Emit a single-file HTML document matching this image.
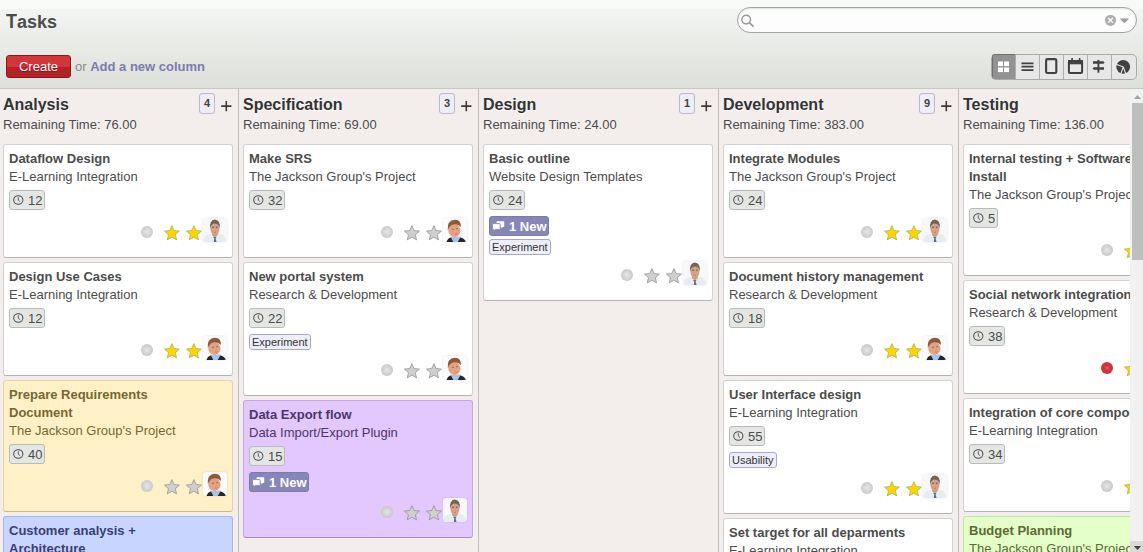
<!DOCTYPE html>
<html><head><meta charset="utf-8"><title>Tasks</title><style>
*{margin:0;padding:0;box-sizing:border-box}
html,body{width:1143px;height:552px;overflow:hidden;font-family:"Liberation Sans", sans-serif;background:#f0eeee}
.ab{position:absolute}
.b{font-weight:bold}
#hdr{position:absolute;left:0;top:0;width:1143px;height:89px;background:linear-gradient(#f8faf7 0,#f8faf7 9px,#f3f5f2 9px,#dddfdb 88px);border-bottom:1px solid #c6c8c6}
#title{position:absolute;left:6px;top:11px;font-size:18px;line-height:22px;font-weight:bold;color:#4c4c4c}
#search{position:absolute;left:737px;top:7px;width:400px;height:26px;border:1px solid #a3a3a3;border-radius:13px;background:#fdfdfd;box-shadow:inset 0 1px 2px rgba(0,0,0,0.12)}
#create{position:absolute;left:6px;top:55px;width:65px;height:23px;border:1px solid #8e1818;border-radius:3px;background:linear-gradient(#d2353a 0,#d2353a 50%,#b32226 50%,#b32226 100%);color:#fff;font-size:13px;line-height:21px;text-align:center;text-shadow:0 1px 1px rgba(0,0,0,0.35)}
#ortxt{position:absolute;left:75px;top:58px;font-size:13px;line-height:18px;color:#8a8a8a}
#ortxt a{color:#7c7bad;font-weight:bold;text-decoration:none}
#views{position:absolute;left:991px;top:54px;width:146px;height:26px;border:1px solid #a9aaa9;border-radius:5px;background:#e6e7e6;overflow:hidden}
#views .vb{position:absolute;top:0;height:24px;width:24px;border-left:1px solid #b3b3b3}
#cols{position:absolute;left:0;top:89px;width:1130px;height:463px;background:#f3eeec;overflow:hidden}
.sep{position:absolute;top:0;width:1px;height:463px;background:#bcbfbd}
.colhead{position:absolute;font-size:16px;line-height:20px;color:#333;text-shadow:0 1px 0 #fff;white-space:nowrap}
.rem{position:absolute;font-size:13px;line-height:18px;color:#4c4c4c;white-space:nowrap}
.cnt{position:absolute;width:16px;height:21px;border:1px solid #b8b8c8;border-radius:3px;background:#eeeef8;font-size:11px;font-weight:bold;line-height:19px;text-align:center;color:#444}
.plus{position:absolute;width:12px;height:12px}
.card{position:absolute;width:230px;border:1px solid rgba(0,0,0,0.16);border-radius:3px;overflow:hidden}
.card .t{position:absolute;font-size:13px;line-height:18px;white-space:nowrap}
.hb{position:absolute;height:20px;border:1px solid #b9bbb9;border-radius:3px;background:#e4e6e4;font-size:13px;line-height:15px;color:#4c4c4c}
.nb{position:absolute;white-space:nowrap;width:60px;height:20px;border:1px solid #7d7aae;border-radius:3px;background:#8786b8;color:#fff;font-size:13px;font-weight:bold;line-height:17px}
.tg{position:absolute;height:16px;border:1px solid #a9a9bf;border-radius:3px;background:#eeeefa;color:#333;font-size:11px;line-height:14px;padding-left:2px;white-space:nowrap}
.dot{position:absolute;width:12px;height:12px;border-radius:6px;background-image:radial-gradient(circle at 50% 50%, rgba(255,255,255,0.55) 0, rgba(255,255,255,0) 70%)!important}
.dot.red{background-image:radial-gradient(circle at 50% 50%, rgba(255,255,255,0.25) 0, rgba(255,255,255,0) 30%)!important}
.av{border-radius:3px;box-shadow:0 0 2px rgba(0,0,0,0.15)}
#sb{position:absolute;left:1130px;top:89px;width:13px;height:463px;background:#f0f1f0}
</style></head>
<body>
<div id="hdr">
<div id="title"><span style="display:inline-block;transform:scaleY(1.075);transform-origin:50% 17px">T</span>asks</div>
<div id="search"><svg class="ab" style="left:2px;top:5px" width="16" height="16" viewBox="0 0 16 16"><circle cx="6.2" cy="6.6" r="4.3" fill="none" stroke="#9a9a9a" stroke-width="1.5"/><path d="M9.3 9.7 L13.5 13.6" stroke="#9a9a9a" stroke-width="1.8"/></svg><svg class="ab" style="left:365px;top:5px" width="30" height="14" viewBox="0 0 30 14"><circle cx="7.5" cy="7.3" r="5.6" fill="#b0b0b0"/><path d="M5.2 5 L9.8 9.6 M9.8 5 L5.2 9.6" stroke="#fff" stroke-width="1.3"/><path d="M16.6 5.4 H26.2 L21.4 10.2 Z" fill="#9c9c9c"/></svg></div>
<div id="create">Create</div>
<div id="ortxt">or <a>Add a new column</a></div>
<div id="views"></div>
<svg class="ab" style="left:0;top:0" width="1143" height="89" viewBox="0 0 1143 89"><rect x="992.5" y="54.5" width="22.5" height="24.5" fill="#919291"/><path d="M992.5 77 V56.5 Q992.5 54.5 994.5 54.5 H1015" fill="none" stroke="#6f706f" stroke-width="1"/><rect x="998" y="61.5" width="5" height="4.6" fill="#fff"/><rect x="1004" y="61.5" width="5" height="4.6" fill="#fff"/><rect x="998" y="67.5" width="5" height="4.6" fill="#fff"/><rect x="1004" y="67.5" width="5" height="4.6" fill="#fff"/><path d="M1015.5 55 V79 M1039.5 55 V79 M1063.5 55 V79 M1087.5 55 V79 M1111.5 55 V79" stroke="#adaead" stroke-width="1"/><path d="M1021.5 63.3 H1033.5 M1021.5 66.7 H1033.5 M1021.5 70.1 H1033.5" stroke="#404040" stroke-width="1.8"/><rect x="1046.1" y="59.1" width="10.2" height="13.9" rx="1.3" fill="none" stroke="#404040" stroke-width="2.1"/><rect x="1068.9" y="60.9" width="13.2" height="12.1" rx="1" fill="none" stroke="#404040" stroke-width="2"/><rect x="1068" y="60" width="15" height="4.3" fill="#404040"/><path d="M1072.1 58 V61.5 M1079.6 58 V61.5" stroke="#404040" stroke-width="1.6"/><path d="M1093 61.2 H1103.3 L1104.7 62.45 L1103.3 63.7 H1093 Z M1104 67.2 H1093.9 L1092.5 68.45 L1093.9 69.7 H1104 Z" fill="#404040"/><path d="M1098.4 59.9 V72.7" stroke="#404040" stroke-width="1.9"/><circle cx="1123.2" cy="66.8" r="6.9" fill="#404040"/><path d="M1123.3 66.9 L1115.5 64.1 M1123.3 66.9 L1120.6 74.5 M1123.3 66.9 L1126 74.5" stroke="#e6e7e6" stroke-width="1.1"/></svg>
</div>
<div id="cols">
<div class="sep" style="left:238px"></div>
<div class="sep" style="left:478px"></div>
<div class="sep" style="left:718px"></div>
<div class="sep" style="left:958px"></div>
</div>
<div id="layer" style="position:absolute;left:0;top:0;width:1130px;height:552px;overflow:hidden">
<div class="colhead b" style="left:3px;top:95px">Analysis</div>
<div class="rem" style="left:3px;top:116px">Remaining Time: 76.00</div>
<div class="cnt" style="left:199px;top:93px">4</div>
<div class="plus" style="left:220px;top:98px"><svg width="12" height="12" viewBox="0 0 12 12"><path d="M6.3 1 V11.2 M1.2 6.1 H11.4" stroke="#3a3a3a" stroke-width="1.55"/></svg></div>
<div class="card" style="left:3px;top:144px;height:114px;background:#ffffff;border-color:#d0d3d1;border-bottom-color:#b1b4b2;color:#4c4c4c">
<div class="t b" style="left:5px;top:5px">Dataflow Design</div>
<div class="t" style="left:5px;top:23px">E-Learning Integration</div>
<div class="hb" style="left:5px;top:45px;width:36px"><svg width="11" height="10" viewBox="0 0 11 10" style="position:absolute;left:3px;top:3.5px"><ellipse cx="5.3" cy="5" rx="4.6" ry="4.3" fill="none" stroke="#4c4c4c" stroke-width="1.05"/><path d="M5.3 2.3 V5.1 L7.1 6.7" fill="none" stroke="#4c4c4c" stroke-width="0.9"/></svg><span style="position:absolute;left:18px;top:2px">12</span></div>
<div class="dot" style="left:137px;top:81px;background:#c9c9c9"></div>
<svg class="ab" style="left:160px;top:80px" width="16" height="16" viewBox="0 0 16 16"><polygon points="7.90,0.60 10.07,5.51 15.41,6.06 11.42,9.64 12.54,14.89 7.90,12.20 3.26,14.89 4.38,9.64 0.39,6.06 5.73,5.51" fill="#ffd500" stroke="#9a9a60" stroke-width="0.6" stroke-linejoin="miter"/></svg>
<svg class="ab" style="left:182px;top:80px" width="16" height="16" viewBox="0 0 16 16"><polygon points="7.90,0.60 10.07,5.51 15.41,6.06 11.42,9.64 12.54,14.89 7.90,12.20 3.26,14.89 4.38,9.64 0.39,6.06 5.73,5.51" fill="#ffd500" stroke="#9a9a60" stroke-width="0.6" stroke-linejoin="miter"/></svg>
<svg class="ab av" style="left:199px;top:73px" width="24" height="24" viewBox="0 0 24 24"><rect width="24" height="24" rx="3" fill="#f7f8f9"/><path d="M0.5 24 V21.5 Q1.5 17 7.5 15.8 L11.8 18 L16 15.8 Q22.5 17 23.5 21.5 V24 Z" fill="#e8ecf1"/><path d="M10 18.8 L13.6 18.8 L12.6 20.6 L13.6 24 L10.8 24 L11.2 20.6 Z" fill="#5f6f88"/><path d="M8.8 13 L15 13 L14.6 17.2 L11.8 19 L9.2 17.2 Z" fill="#c99880"/><path d="M7.4 9.5 Q7.4 16.8 11.9 17.2 Q16.4 16.8 16.4 9.5 Q16.4 4.6 11.9 4.6 Q7.4 4.6 7.4 9.5 Z" fill="#d6a187"/><path d="M9 9.2 H11 M12.8 9.2 H14.8" stroke="#6a4a3a" stroke-width="0.9"/><path d="M11.2 14.4 H13" stroke="#a86a5a" stroke-width="0.6"/><path d="M7 11 Q6.2 2 11.8 1.4 Q17.6 1.6 16.9 11 Q16.6 5.6 11.8 5.4 Q7.6 5.6 7 11 Z" fill="#756454"/></svg>
</div>
<div class="card" style="left:3px;top:262px;height:114px;background:#ffffff;border-color:#d0d3d1;border-bottom-color:#b1b4b2;color:#4c4c4c">
<div class="t b" style="left:5px;top:5px">Design Use Cases</div>
<div class="t" style="left:5px;top:23px">E-Learning Integration</div>
<div class="hb" style="left:5px;top:45px;width:36px"><svg width="11" height="10" viewBox="0 0 11 10" style="position:absolute;left:3px;top:3.5px"><ellipse cx="5.3" cy="5" rx="4.6" ry="4.3" fill="none" stroke="#4c4c4c" stroke-width="1.05"/><path d="M5.3 2.3 V5.1 L7.1 6.7" fill="none" stroke="#4c4c4c" stroke-width="0.9"/></svg><span style="position:absolute;left:18px;top:2px">12</span></div>
<div class="dot" style="left:137px;top:81px;background:#c9c9c9"></div>
<svg class="ab" style="left:160px;top:80px" width="16" height="16" viewBox="0 0 16 16"><polygon points="7.90,0.60 10.07,5.51 15.41,6.06 11.42,9.64 12.54,14.89 7.90,12.20 3.26,14.89 4.38,9.64 0.39,6.06 5.73,5.51" fill="#ffd500" stroke="#9a9a60" stroke-width="0.6" stroke-linejoin="miter"/></svg>
<svg class="ab" style="left:182px;top:80px" width="16" height="16" viewBox="0 0 16 16"><polygon points="7.90,0.60 10.07,5.51 15.41,6.06 11.42,9.64 12.54,14.89 7.90,12.20 3.26,14.89 4.38,9.64 0.39,6.06 5.73,5.51" fill="#ffd500" stroke="#9a9a60" stroke-width="0.6" stroke-linejoin="miter"/></svg>
<svg class="ab av" style="left:199px;top:73px" width="24" height="24" viewBox="0 0 24 24"><rect width="24" height="24" rx="3" fill="#fbfbfb"/><path d="M3.5 24 Q4.5 20 9 19 L16 19 Q21.5 20 23 24 Z" fill="#23262b"/><path d="M7.6 18.6 L17.8 18.6 L14.8 24 L10.2 24 Z" fill="#a9c2e6"/><ellipse cx="11.4" cy="12.4" rx="6.1" ry="6.6" fill="#e3a383" transform="rotate(-12 11.4 12.4)"/><path d="M9 11.3 H11 M13 10.7 H15" stroke="#8a5a40" stroke-width="0.8"/><path d="M12.2 16 Q13.5 16.6 14.6 15.6" stroke="#b86a5a" stroke-width="0.7" fill="none"/><path d="M4.8 12.5 Q4 2 12 1.8 Q18.5 2.2 17.8 9 Q15.5 5.8 11 6.2 Q6.5 7 4.8 12.5 Z" fill="#8c5a38"/></svg>
</div>
<div class="card" style="left:3px;top:380px;height:132px;background:#fff1c7;border-color:#e0d4ab;border-bottom-color:#c8b98e;color:#756832">
<div class="t b" style="left:5px;top:5px">Prepare Requirements</div>
<div class="t b" style="left:5px;top:23px">Document</div>
<div class="t" style="left:5px;top:41px">The Jackson Group's Project</div>
<div class="hb" style="left:5px;top:63px;width:36px"><svg width="11" height="10" viewBox="0 0 11 10" style="position:absolute;left:3px;top:3.5px"><ellipse cx="5.3" cy="5" rx="4.6" ry="4.3" fill="none" stroke="#4c4c4c" stroke-width="1.05"/><path d="M5.3 2.3 V5.1 L7.1 6.7" fill="none" stroke="#4c4c4c" stroke-width="0.9"/></svg><span style="position:absolute;left:18px;top:2px">40</span></div>
<div class="dot" style="left:137px;top:99px;background:#c9c9c9"></div>
<svg class="ab" style="left:160px;top:98px" width="16" height="16" viewBox="0 0 16 16"><polygon points="7.90,0.60 10.07,5.51 15.41,6.06 11.42,9.64 12.54,14.89 7.90,12.20 3.26,14.89 4.38,9.64 0.39,6.06 5.73,5.51" fill="#cfcfcf" stroke="#7d7d7d" stroke-width="0.6" stroke-linejoin="miter"/></svg>
<svg class="ab" style="left:182px;top:98px" width="16" height="16" viewBox="0 0 16 16"><polygon points="7.90,0.60 10.07,5.51 15.41,6.06 11.42,9.64 12.54,14.89 7.90,12.20 3.26,14.89 4.38,9.64 0.39,6.06 5.73,5.51" fill="#cfcfcf" stroke="#7d7d7d" stroke-width="0.6" stroke-linejoin="miter"/></svg>
<svg class="ab av" style="left:199px;top:91px" width="24" height="24" viewBox="0 0 24 24"><rect width="24" height="24" rx="3" fill="#fbfbfb"/><path d="M3.5 24 Q4.5 20 9 19 L16 19 Q21.5 20 23 24 Z" fill="#23262b"/><path d="M7.6 18.6 L17.8 18.6 L14.8 24 L10.2 24 Z" fill="#a9c2e6"/><ellipse cx="11.4" cy="12.4" rx="6.1" ry="6.6" fill="#e3a383" transform="rotate(-12 11.4 12.4)"/><path d="M9 11.3 H11 M13 10.7 H15" stroke="#8a5a40" stroke-width="0.8"/><path d="M12.2 16 Q13.5 16.6 14.6 15.6" stroke="#b86a5a" stroke-width="0.7" fill="none"/><path d="M4.8 12.5 Q4 2 12 1.8 Q18.5 2.2 17.8 9 Q15.5 5.8 11 6.2 Q6.5 7 4.8 12.5 Z" fill="#8c5a38"/></svg>
</div>
<div class="card" style="left:3px;top:516px;height:132px;background:#c7d5ff;border-color:#a9b6df;border-bottom-color:#8f9bc4;color:#3b3e75">
<div class="t b" style="left:5px;top:5px">Customer analysis +</div>
<div class="t b" style="left:5px;top:23px">Architecture</div>
<div class="t" style="left:5px;top:41px">The Jackson Group's Project</div>
<div class="hb" style="left:5px;top:63px;width:36px"><svg width="11" height="10" viewBox="0 0 11 10" style="position:absolute;left:3px;top:3.5px"><ellipse cx="5.3" cy="5" rx="4.6" ry="4.3" fill="none" stroke="#4c4c4c" stroke-width="1.05"/><path d="M5.3 2.3 V5.1 L7.1 6.7" fill="none" stroke="#4c4c4c" stroke-width="0.9"/></svg><span style="position:absolute;left:18px;top:2px">40</span></div>
<div class="dot" style="left:137px;top:99px;background:#c9c9c9"></div>
<svg class="ab" style="left:160px;top:98px" width="16" height="16" viewBox="0 0 16 16"><polygon points="7.90,0.60 10.07,5.51 15.41,6.06 11.42,9.64 12.54,14.89 7.90,12.20 3.26,14.89 4.38,9.64 0.39,6.06 5.73,5.51" fill="#cfcfcf" stroke="#7d7d7d" stroke-width="0.6" stroke-linejoin="miter"/></svg>
<svg class="ab" style="left:182px;top:98px" width="16" height="16" viewBox="0 0 16 16"><polygon points="7.90,0.60 10.07,5.51 15.41,6.06 11.42,9.64 12.54,14.89 7.90,12.20 3.26,14.89 4.38,9.64 0.39,6.06 5.73,5.51" fill="#cfcfcf" stroke="#7d7d7d" stroke-width="0.6" stroke-linejoin="miter"/></svg>
<svg class="ab av" style="left:199px;top:91px" width="24" height="24" viewBox="0 0 24 24"><rect width="24" height="24" rx="3" fill="#fbfbfb"/><path d="M3.5 24 Q4.5 20 9 19 L16 19 Q21.5 20 23 24 Z" fill="#23262b"/><path d="M7.6 18.6 L17.8 18.6 L14.8 24 L10.2 24 Z" fill="#a9c2e6"/><ellipse cx="11.4" cy="12.4" rx="6.1" ry="6.6" fill="#e3a383" transform="rotate(-12 11.4 12.4)"/><path d="M9 11.3 H11 M13 10.7 H15" stroke="#8a5a40" stroke-width="0.8"/><path d="M12.2 16 Q13.5 16.6 14.6 15.6" stroke="#b86a5a" stroke-width="0.7" fill="none"/><path d="M4.8 12.5 Q4 2 12 1.8 Q18.5 2.2 17.8 9 Q15.5 5.8 11 6.2 Q6.5 7 4.8 12.5 Z" fill="#8c5a38"/></svg>
</div>
<div class="colhead b" style="left:243px;top:95px">Specification</div>
<div class="rem" style="left:243px;top:116px">Remaining Time: 69.00</div>
<div class="cnt" style="left:439px;top:93px">3</div>
<div class="plus" style="left:460px;top:98px"><svg width="12" height="12" viewBox="0 0 12 12"><path d="M6.3 1 V11.2 M1.2 6.1 H11.4" stroke="#3a3a3a" stroke-width="1.55"/></svg></div>
<div class="card" style="left:243px;top:144px;height:114px;background:#ffffff;border-color:#d0d3d1;border-bottom-color:#b1b4b2;color:#4c4c4c">
<div class="t b" style="left:5px;top:5px">Make SRS</div>
<div class="t" style="left:5px;top:23px">The Jackson Group's Project</div>
<div class="hb" style="left:5px;top:45px;width:36px"><svg width="11" height="10" viewBox="0 0 11 10" style="position:absolute;left:3px;top:3.5px"><ellipse cx="5.3" cy="5" rx="4.6" ry="4.3" fill="none" stroke="#4c4c4c" stroke-width="1.05"/><path d="M5.3 2.3 V5.1 L7.1 6.7" fill="none" stroke="#4c4c4c" stroke-width="0.9"/></svg><span style="position:absolute;left:18px;top:2px">32</span></div>
<div class="dot" style="left:137px;top:81px;background:#c9c9c9"></div>
<svg class="ab" style="left:160px;top:80px" width="16" height="16" viewBox="0 0 16 16"><polygon points="7.90,0.60 10.07,5.51 15.41,6.06 11.42,9.64 12.54,14.89 7.90,12.20 3.26,14.89 4.38,9.64 0.39,6.06 5.73,5.51" fill="#cfcfcf" stroke="#7d7d7d" stroke-width="0.6" stroke-linejoin="miter"/></svg>
<svg class="ab" style="left:182px;top:80px" width="16" height="16" viewBox="0 0 16 16"><polygon points="7.90,0.60 10.07,5.51 15.41,6.06 11.42,9.64 12.54,14.89 7.90,12.20 3.26,14.89 4.38,9.64 0.39,6.06 5.73,5.51" fill="#cfcfcf" stroke="#7d7d7d" stroke-width="0.6" stroke-linejoin="miter"/></svg>
<svg class="ab av" style="left:199px;top:73px" width="24" height="24" viewBox="0 0 24 24"><rect width="24" height="24" rx="3" fill="#fbfbfb"/><path d="M3.5 24 Q4.5 20 9 19 L16 19 Q21.5 20 23 24 Z" fill="#23262b"/><path d="M7.6 18.6 L17.8 18.6 L14.8 24 L10.2 24 Z" fill="#a9c2e6"/><ellipse cx="11.4" cy="12.4" rx="6.1" ry="6.6" fill="#e3a383" transform="rotate(-12 11.4 12.4)"/><path d="M9 11.3 H11 M13 10.7 H15" stroke="#8a5a40" stroke-width="0.8"/><path d="M12.2 16 Q13.5 16.6 14.6 15.6" stroke="#b86a5a" stroke-width="0.7" fill="none"/><path d="M4.8 12.5 Q4 2 12 1.8 Q18.5 2.2 17.8 9 Q15.5 5.8 11 6.2 Q6.5 7 4.8 12.5 Z" fill="#8c5a38"/></svg>
</div>
<div class="card" style="left:243px;top:262px;height:134px;background:#ffffff;border-color:#d0d3d1;border-bottom-color:#b1b4b2;color:#4c4c4c">
<div class="t b" style="left:5px;top:5px">New portal system</div>
<div class="t" style="left:5px;top:23px">Research &amp; Development</div>
<div class="hb" style="left:5px;top:45px;width:36px"><svg width="11" height="10" viewBox="0 0 11 10" style="position:absolute;left:3px;top:3.5px"><ellipse cx="5.3" cy="5" rx="4.6" ry="4.3" fill="none" stroke="#4c4c4c" stroke-width="1.05"/><path d="M5.3 2.3 V5.1 L7.1 6.7" fill="none" stroke="#4c4c4c" stroke-width="0.9"/></svg><span style="position:absolute;left:18px;top:2px">22</span></div>
<div class="tg" style="left:5px;top:71px;width:62px">Experiment</div>
<div class="dot" style="left:137px;top:101px;background:#c9c9c9"></div>
<svg class="ab" style="left:160px;top:100px" width="16" height="16" viewBox="0 0 16 16"><polygon points="7.90,0.60 10.07,5.51 15.41,6.06 11.42,9.64 12.54,14.89 7.90,12.20 3.26,14.89 4.38,9.64 0.39,6.06 5.73,5.51" fill="#cfcfcf" stroke="#7d7d7d" stroke-width="0.6" stroke-linejoin="miter"/></svg>
<svg class="ab" style="left:182px;top:100px" width="16" height="16" viewBox="0 0 16 16"><polygon points="7.90,0.60 10.07,5.51 15.41,6.06 11.42,9.64 12.54,14.89 7.90,12.20 3.26,14.89 4.38,9.64 0.39,6.06 5.73,5.51" fill="#cfcfcf" stroke="#7d7d7d" stroke-width="0.6" stroke-linejoin="miter"/></svg>
<svg class="ab av" style="left:199px;top:93px" width="24" height="24" viewBox="0 0 24 24"><rect width="24" height="24" rx="3" fill="#fbfbfb"/><path d="M3.5 24 Q4.5 20 9 19 L16 19 Q21.5 20 23 24 Z" fill="#23262b"/><path d="M7.6 18.6 L17.8 18.6 L14.8 24 L10.2 24 Z" fill="#a9c2e6"/><ellipse cx="11.4" cy="12.4" rx="6.1" ry="6.6" fill="#e3a383" transform="rotate(-12 11.4 12.4)"/><path d="M9 11.3 H11 M13 10.7 H15" stroke="#8a5a40" stroke-width="0.8"/><path d="M12.2 16 Q13.5 16.6 14.6 15.6" stroke="#b86a5a" stroke-width="0.7" fill="none"/><path d="M4.8 12.5 Q4 2 12 1.8 Q18.5 2.2 17.8 9 Q15.5 5.8 11 6.2 Q6.5 7 4.8 12.5 Z" fill="#8c5a38"/></svg>
</div>
<div class="card" style="left:243px;top:400px;height:138px;background:#e3c7ff;border-color:#c3a8df;border-bottom-color:#a98cc2;color:#4c3668">
<div class="t b" style="left:5px;top:5px">Data Export flow</div>
<div class="t" style="left:5px;top:23px">Data Import/Export Plugin</div>
<div class="hb" style="left:5px;top:45px;width:36px"><svg width="11" height="10" viewBox="0 0 11 10" style="position:absolute;left:3px;top:3.5px"><ellipse cx="5.3" cy="5" rx="4.6" ry="4.3" fill="none" stroke="#4c4c4c" stroke-width="1.05"/><path d="M5.3 2.3 V5.1 L7.1 6.7" fill="none" stroke="#4c4c4c" stroke-width="0.9"/></svg><span style="position:absolute;left:18px;top:2px">15</span></div>
<div class="nb" style="left:5px;top:71px"><svg width="13" height="11" viewBox="0 0 13 11" style="position:absolute;left:2px;top:4px"><path d="M5.2 0.3 H11.6 Q12.3 0.3 12.3 1 V5.2 Q12.3 5.9 11.6 5.9 H10.6 L9.6 7.4 L9.3 5.9 H5.2 Q4.5 5.9 4.5 5.2 V1 Q4.5 0.3 5.2 0.3 Z" fill="#fff"/><path d="M1.2 2.6 H7.4 Q8.2 2.6 8.2 3.4 V7.6 Q8.2 8.4 7.4 8.4 H3.3 L1.6 10.4 L1.9 8.4 H1.2 Q0.4 8.4 0.4 7.6 V3.4 Q0.4 2.6 1.2 2.6 Z" fill="#fff" stroke="#8786b8" stroke-width="0.9"/></svg><span style="position:absolute;left:19px;top:1px">1 New</span></div>
<div class="dot" style="left:137px;top:105px;background:#c9c9c9"></div>
<svg class="ab" style="left:160px;top:104px" width="16" height="16" viewBox="0 0 16 16"><polygon points="7.90,0.60 10.07,5.51 15.41,6.06 11.42,9.64 12.54,14.89 7.90,12.20 3.26,14.89 4.38,9.64 0.39,6.06 5.73,5.51" fill="#cfcfcf" stroke="#7d7d7d" stroke-width="0.6" stroke-linejoin="miter"/></svg>
<svg class="ab" style="left:182px;top:104px" width="16" height="16" viewBox="0 0 16 16"><polygon points="7.90,0.60 10.07,5.51 15.41,6.06 11.42,9.64 12.54,14.89 7.90,12.20 3.26,14.89 4.38,9.64 0.39,6.06 5.73,5.51" fill="#cfcfcf" stroke="#7d7d7d" stroke-width="0.6" stroke-linejoin="miter"/></svg>
<svg class="ab av" style="left:199px;top:97px" width="24" height="24" viewBox="0 0 24 24"><rect width="24" height="24" rx="3" fill="#f7f8f9"/><path d="M0.5 24 V21.5 Q1.5 17 7.5 15.8 L11.8 18 L16 15.8 Q22.5 17 23.5 21.5 V24 Z" fill="#e8ecf1"/><path d="M10 18.8 L13.6 18.8 L12.6 20.6 L13.6 24 L10.8 24 L11.2 20.6 Z" fill="#5f6f88"/><path d="M8.8 13 L15 13 L14.6 17.2 L11.8 19 L9.2 17.2 Z" fill="#c99880"/><path d="M7.4 9.5 Q7.4 16.8 11.9 17.2 Q16.4 16.8 16.4 9.5 Q16.4 4.6 11.9 4.6 Q7.4 4.6 7.4 9.5 Z" fill="#d6a187"/><path d="M9 9.2 H11 M12.8 9.2 H14.8" stroke="#6a4a3a" stroke-width="0.9"/><path d="M11.2 14.4 H13" stroke="#a86a5a" stroke-width="0.6"/><path d="M7 11 Q6.2 2 11.8 1.4 Q17.6 1.6 16.9 11 Q16.6 5.6 11.8 5.4 Q7.6 5.6 7 11 Z" fill="#756454"/></svg>
</div>
<div class="colhead b" style="left:483px;top:95px">Design</div>
<div class="rem" style="left:483px;top:116px">Remaining Time: 24.00</div>
<div class="cnt" style="left:679px;top:93px">1</div>
<div class="plus" style="left:700px;top:98px"><svg width="12" height="12" viewBox="0 0 12 12"><path d="M6.3 1 V11.2 M1.2 6.1 H11.4" stroke="#3a3a3a" stroke-width="1.55"/></svg></div>
<div class="card" style="left:483px;top:144px;height:157px;background:#ffffff;border-color:#d0d3d1;border-bottom-color:#b1b4b2;color:#4c4c4c">
<div class="t b" style="left:5px;top:5px">Basic outline</div>
<div class="t" style="left:5px;top:23px">Website Design Templates</div>
<div class="hb" style="left:5px;top:45px;width:36px"><svg width="11" height="10" viewBox="0 0 11 10" style="position:absolute;left:3px;top:3.5px"><ellipse cx="5.3" cy="5" rx="4.6" ry="4.3" fill="none" stroke="#4c4c4c" stroke-width="1.05"/><path d="M5.3 2.3 V5.1 L7.1 6.7" fill="none" stroke="#4c4c4c" stroke-width="0.9"/></svg><span style="position:absolute;left:18px;top:2px">24</span></div>
<div class="nb" style="left:5px;top:71px"><svg width="13" height="11" viewBox="0 0 13 11" style="position:absolute;left:2px;top:4px"><path d="M5.2 0.3 H11.6 Q12.3 0.3 12.3 1 V5.2 Q12.3 5.9 11.6 5.9 H10.6 L9.6 7.4 L9.3 5.9 H5.2 Q4.5 5.9 4.5 5.2 V1 Q4.5 0.3 5.2 0.3 Z" fill="#fff"/><path d="M1.2 2.6 H7.4 Q8.2 2.6 8.2 3.4 V7.6 Q8.2 8.4 7.4 8.4 H3.3 L1.6 10.4 L1.9 8.4 H1.2 Q0.4 8.4 0.4 7.6 V3.4 Q0.4 2.6 1.2 2.6 Z" fill="#fff" stroke="#8786b8" stroke-width="0.9"/></svg><span style="position:absolute;left:19px;top:1px">1 New</span></div>
<div class="tg" style="left:5px;top:94px;width:62px">Experiment</div>
<div class="dot" style="left:137px;top:124px;background:#c9c9c9"></div>
<svg class="ab" style="left:160px;top:123px" width="16" height="16" viewBox="0 0 16 16"><polygon points="7.90,0.60 10.07,5.51 15.41,6.06 11.42,9.64 12.54,14.89 7.90,12.20 3.26,14.89 4.38,9.64 0.39,6.06 5.73,5.51" fill="#cfcfcf" stroke="#7d7d7d" stroke-width="0.6" stroke-linejoin="miter"/></svg>
<svg class="ab" style="left:182px;top:123px" width="16" height="16" viewBox="0 0 16 16"><polygon points="7.90,0.60 10.07,5.51 15.41,6.06 11.42,9.64 12.54,14.89 7.90,12.20 3.26,14.89 4.38,9.64 0.39,6.06 5.73,5.51" fill="#cfcfcf" stroke="#7d7d7d" stroke-width="0.6" stroke-linejoin="miter"/></svg>
<svg class="ab av" style="left:199px;top:116px" width="24" height="24" viewBox="0 0 24 24"><rect width="24" height="24" rx="3" fill="#f7f8f9"/><path d="M0.5 24 V21.5 Q1.5 17 7.5 15.8 L11.8 18 L16 15.8 Q22.5 17 23.5 21.5 V24 Z" fill="#e8ecf1"/><path d="M10 18.8 L13.6 18.8 L12.6 20.6 L13.6 24 L10.8 24 L11.2 20.6 Z" fill="#5f6f88"/><path d="M8.8 13 L15 13 L14.6 17.2 L11.8 19 L9.2 17.2 Z" fill="#c99880"/><path d="M7.4 9.5 Q7.4 16.8 11.9 17.2 Q16.4 16.8 16.4 9.5 Q16.4 4.6 11.9 4.6 Q7.4 4.6 7.4 9.5 Z" fill="#d6a187"/><path d="M9 9.2 H11 M12.8 9.2 H14.8" stroke="#6a4a3a" stroke-width="0.9"/><path d="M11.2 14.4 H13" stroke="#a86a5a" stroke-width="0.6"/><path d="M7 11 Q6.2 2 11.8 1.4 Q17.6 1.6 16.9 11 Q16.6 5.6 11.8 5.4 Q7.6 5.6 7 11 Z" fill="#756454"/></svg>
</div>
<div class="colhead b" style="left:723px;top:95px">Development</div>
<div class="rem" style="left:723px;top:116px">Remaining Time: 383.00</div>
<div class="cnt" style="left:919px;top:93px">9</div>
<div class="plus" style="left:940px;top:98px"><svg width="12" height="12" viewBox="0 0 12 12"><path d="M6.3 1 V11.2 M1.2 6.1 H11.4" stroke="#3a3a3a" stroke-width="1.55"/></svg></div>
<div class="card" style="left:723px;top:144px;height:114px;background:#ffffff;border-color:#d0d3d1;border-bottom-color:#b1b4b2;color:#4c4c4c">
<div class="t b" style="left:5px;top:5px">Integrate Modules</div>
<div class="t" style="left:5px;top:23px">The Jackson Group's Project</div>
<div class="hb" style="left:5px;top:45px;width:36px"><svg width="11" height="10" viewBox="0 0 11 10" style="position:absolute;left:3px;top:3.5px"><ellipse cx="5.3" cy="5" rx="4.6" ry="4.3" fill="none" stroke="#4c4c4c" stroke-width="1.05"/><path d="M5.3 2.3 V5.1 L7.1 6.7" fill="none" stroke="#4c4c4c" stroke-width="0.9"/></svg><span style="position:absolute;left:18px;top:2px">24</span></div>
<div class="dot" style="left:137px;top:81px;background:#c9c9c9"></div>
<svg class="ab" style="left:160px;top:80px" width="16" height="16" viewBox="0 0 16 16"><polygon points="7.90,0.60 10.07,5.51 15.41,6.06 11.42,9.64 12.54,14.89 7.90,12.20 3.26,14.89 4.38,9.64 0.39,6.06 5.73,5.51" fill="#ffd500" stroke="#9a9a60" stroke-width="0.6" stroke-linejoin="miter"/></svg>
<svg class="ab" style="left:182px;top:80px" width="16" height="16" viewBox="0 0 16 16"><polygon points="7.90,0.60 10.07,5.51 15.41,6.06 11.42,9.64 12.54,14.89 7.90,12.20 3.26,14.89 4.38,9.64 0.39,6.06 5.73,5.51" fill="#ffd500" stroke="#9a9a60" stroke-width="0.6" stroke-linejoin="miter"/></svg>
<svg class="ab av" style="left:199px;top:73px" width="24" height="24" viewBox="0 0 24 24"><rect width="24" height="24" rx="3" fill="#f7f8f9"/><path d="M0.5 24 V21.5 Q1.5 17 7.5 15.8 L11.8 18 L16 15.8 Q22.5 17 23.5 21.5 V24 Z" fill="#e8ecf1"/><path d="M10 18.8 L13.6 18.8 L12.6 20.6 L13.6 24 L10.8 24 L11.2 20.6 Z" fill="#5f6f88"/><path d="M8.8 13 L15 13 L14.6 17.2 L11.8 19 L9.2 17.2 Z" fill="#c99880"/><path d="M7.4 9.5 Q7.4 16.8 11.9 17.2 Q16.4 16.8 16.4 9.5 Q16.4 4.6 11.9 4.6 Q7.4 4.6 7.4 9.5 Z" fill="#d6a187"/><path d="M9 9.2 H11 M12.8 9.2 H14.8" stroke="#6a4a3a" stroke-width="0.9"/><path d="M11.2 14.4 H13" stroke="#a86a5a" stroke-width="0.6"/><path d="M7 11 Q6.2 2 11.8 1.4 Q17.6 1.6 16.9 11 Q16.6 5.6 11.8 5.4 Q7.6 5.6 7 11 Z" fill="#756454"/></svg>
</div>
<div class="card" style="left:723px;top:262px;height:114px;background:#ffffff;border-color:#d0d3d1;border-bottom-color:#b1b4b2;color:#4c4c4c">
<div class="t b" style="left:5px;top:5px">Document history management</div>
<div class="t" style="left:5px;top:23px">Research &amp; Development</div>
<div class="hb" style="left:5px;top:45px;width:36px"><svg width="11" height="10" viewBox="0 0 11 10" style="position:absolute;left:3px;top:3.5px"><ellipse cx="5.3" cy="5" rx="4.6" ry="4.3" fill="none" stroke="#4c4c4c" stroke-width="1.05"/><path d="M5.3 2.3 V5.1 L7.1 6.7" fill="none" stroke="#4c4c4c" stroke-width="0.9"/></svg><span style="position:absolute;left:18px;top:2px">18</span></div>
<div class="dot" style="left:137px;top:81px;background:#c9c9c9"></div>
<svg class="ab" style="left:160px;top:80px" width="16" height="16" viewBox="0 0 16 16"><polygon points="7.90,0.60 10.07,5.51 15.41,6.06 11.42,9.64 12.54,14.89 7.90,12.20 3.26,14.89 4.38,9.64 0.39,6.06 5.73,5.51" fill="#ffd500" stroke="#9a9a60" stroke-width="0.6" stroke-linejoin="miter"/></svg>
<svg class="ab" style="left:182px;top:80px" width="16" height="16" viewBox="0 0 16 16"><polygon points="7.90,0.60 10.07,5.51 15.41,6.06 11.42,9.64 12.54,14.89 7.90,12.20 3.26,14.89 4.38,9.64 0.39,6.06 5.73,5.51" fill="#ffd500" stroke="#9a9a60" stroke-width="0.6" stroke-linejoin="miter"/></svg>
<svg class="ab av" style="left:199px;top:73px" width="24" height="24" viewBox="0 0 24 24"><rect width="24" height="24" rx="3" fill="#fbfbfb"/><path d="M3.5 24 Q4.5 20 9 19 L16 19 Q21.5 20 23 24 Z" fill="#23262b"/><path d="M7.6 18.6 L17.8 18.6 L14.8 24 L10.2 24 Z" fill="#a9c2e6"/><ellipse cx="11.4" cy="12.4" rx="6.1" ry="6.6" fill="#e3a383" transform="rotate(-12 11.4 12.4)"/><path d="M9 11.3 H11 M13 10.7 H15" stroke="#8a5a40" stroke-width="0.8"/><path d="M12.2 16 Q13.5 16.6 14.6 15.6" stroke="#b86a5a" stroke-width="0.7" fill="none"/><path d="M4.8 12.5 Q4 2 12 1.8 Q18.5 2.2 17.8 9 Q15.5 5.8 11 6.2 Q6.5 7 4.8 12.5 Z" fill="#8c5a38"/></svg>
</div>
<div class="card" style="left:723px;top:380px;height:134px;background:#ffffff;border-color:#d0d3d1;border-bottom-color:#b1b4b2;color:#4c4c4c">
<div class="t b" style="left:5px;top:5px">User Interface design</div>
<div class="t" style="left:5px;top:23px">E-Learning Integration</div>
<div class="hb" style="left:5px;top:45px;width:36px"><svg width="11" height="10" viewBox="0 0 11 10" style="position:absolute;left:3px;top:3.5px"><ellipse cx="5.3" cy="5" rx="4.6" ry="4.3" fill="none" stroke="#4c4c4c" stroke-width="1.05"/><path d="M5.3 2.3 V5.1 L7.1 6.7" fill="none" stroke="#4c4c4c" stroke-width="0.9"/></svg><span style="position:absolute;left:18px;top:2px">55</span></div>
<div class="tg" style="left:5px;top:71px;width:48px">Usability</div>
<div class="dot" style="left:137px;top:101px;background:#c9c9c9"></div>
<svg class="ab" style="left:160px;top:100px" width="16" height="16" viewBox="0 0 16 16"><polygon points="7.90,0.60 10.07,5.51 15.41,6.06 11.42,9.64 12.54,14.89 7.90,12.20 3.26,14.89 4.38,9.64 0.39,6.06 5.73,5.51" fill="#ffd500" stroke="#9a9a60" stroke-width="0.6" stroke-linejoin="miter"/></svg>
<svg class="ab" style="left:182px;top:100px" width="16" height="16" viewBox="0 0 16 16"><polygon points="7.90,0.60 10.07,5.51 15.41,6.06 11.42,9.64 12.54,14.89 7.90,12.20 3.26,14.89 4.38,9.64 0.39,6.06 5.73,5.51" fill="#ffd500" stroke="#9a9a60" stroke-width="0.6" stroke-linejoin="miter"/></svg>
<svg class="ab av" style="left:199px;top:93px" width="24" height="24" viewBox="0 0 24 24"><rect width="24" height="24" rx="3" fill="#f7f8f9"/><path d="M0.5 24 V21.5 Q1.5 17 7.5 15.8 L11.8 18 L16 15.8 Q22.5 17 23.5 21.5 V24 Z" fill="#e8ecf1"/><path d="M10 18.8 L13.6 18.8 L12.6 20.6 L13.6 24 L10.8 24 L11.2 20.6 Z" fill="#5f6f88"/><path d="M8.8 13 L15 13 L14.6 17.2 L11.8 19 L9.2 17.2 Z" fill="#c99880"/><path d="M7.4 9.5 Q7.4 16.8 11.9 17.2 Q16.4 16.8 16.4 9.5 Q16.4 4.6 11.9 4.6 Q7.4 4.6 7.4 9.5 Z" fill="#d6a187"/><path d="M9 9.2 H11 M12.8 9.2 H14.8" stroke="#6a4a3a" stroke-width="0.9"/><path d="M11.2 14.4 H13" stroke="#a86a5a" stroke-width="0.6"/><path d="M7 11 Q6.2 2 11.8 1.4 Q17.6 1.6 16.9 11 Q16.6 5.6 11.8 5.4 Q7.6 5.6 7 11 Z" fill="#756454"/></svg>
</div>
<div class="card" style="left:723px;top:518px;height:114px;background:#ffffff;border-color:#d0d3d1;border-bottom-color:#b1b4b2;color:#4c4c4c">
<div class="t b" style="left:5px;top:5px">Set target for all deparments</div>
<div class="t" style="left:5px;top:23px">E-Learning Integration</div>
<div class="hb" style="left:5px;top:45px;width:36px"><svg width="11" height="10" viewBox="0 0 11 10" style="position:absolute;left:3px;top:3.5px"><ellipse cx="5.3" cy="5" rx="4.6" ry="4.3" fill="none" stroke="#4c4c4c" stroke-width="1.05"/><path d="M5.3 2.3 V5.1 L7.1 6.7" fill="none" stroke="#4c4c4c" stroke-width="0.9"/></svg><span style="position:absolute;left:18px;top:2px">12</span></div>
<div class="dot" style="left:137px;top:81px;background:#c9c9c9"></div>
<svg class="ab" style="left:160px;top:80px" width="16" height="16" viewBox="0 0 16 16"><polygon points="7.90,0.60 10.07,5.51 15.41,6.06 11.42,9.64 12.54,14.89 7.90,12.20 3.26,14.89 4.38,9.64 0.39,6.06 5.73,5.51" fill="#ffd500" stroke="#9a9a60" stroke-width="0.6" stroke-linejoin="miter"/></svg>
<svg class="ab" style="left:182px;top:80px" width="16" height="16" viewBox="0 0 16 16"><polygon points="7.90,0.60 10.07,5.51 15.41,6.06 11.42,9.64 12.54,14.89 7.90,12.20 3.26,14.89 4.38,9.64 0.39,6.06 5.73,5.51" fill="#ffd500" stroke="#9a9a60" stroke-width="0.6" stroke-linejoin="miter"/></svg>
<svg class="ab av" style="left:199px;top:73px" width="24" height="24" viewBox="0 0 24 24"><rect width="24" height="24" rx="3" fill="#f7f8f9"/><path d="M0.5 24 V21.5 Q1.5 17 7.5 15.8 L11.8 18 L16 15.8 Q22.5 17 23.5 21.5 V24 Z" fill="#e8ecf1"/><path d="M10 18.8 L13.6 18.8 L12.6 20.6 L13.6 24 L10.8 24 L11.2 20.6 Z" fill="#5f6f88"/><path d="M8.8 13 L15 13 L14.6 17.2 L11.8 19 L9.2 17.2 Z" fill="#c99880"/><path d="M7.4 9.5 Q7.4 16.8 11.9 17.2 Q16.4 16.8 16.4 9.5 Q16.4 4.6 11.9 4.6 Q7.4 4.6 7.4 9.5 Z" fill="#d6a187"/><path d="M9 9.2 H11 M12.8 9.2 H14.8" stroke="#6a4a3a" stroke-width="0.9"/><path d="M11.2 14.4 H13" stroke="#a86a5a" stroke-width="0.6"/><path d="M7 11 Q6.2 2 11.8 1.4 Q17.6 1.6 16.9 11 Q16.6 5.6 11.8 5.4 Q7.6 5.6 7 11 Z" fill="#756454"/></svg>
</div>
<div class="colhead b" style="left:963px;top:95px">Testing</div>
<div class="rem" style="left:963px;top:116px">Remaining Time: 136.00</div>
<div class="card" style="left:963px;top:144px;height:132px;background:#ffffff;border-color:#d0d3d1;border-bottom-color:#b1b4b2;color:#4c4c4c">
<div class="t b" style="left:5px;top:5px">Internal testing + Software</div>
<div class="t b" style="left:5px;top:23px">Install</div>
<div class="t" style="left:5px;top:41px">The Jackson Group's Project</div>
<div class="hb" style="left:5px;top:63px;width:29px"><svg width="11" height="10" viewBox="0 0 11 10" style="position:absolute;left:3px;top:3.5px"><ellipse cx="5.3" cy="5" rx="4.6" ry="4.3" fill="none" stroke="#4c4c4c" stroke-width="1.05"/><path d="M5.3 2.3 V5.1 L7.1 6.7" fill="none" stroke="#4c4c4c" stroke-width="0.9"/></svg><span style="position:absolute;left:18px;top:2px">5</span></div>
<div class="dot" style="left:137px;top:99px;background:#c9c9c9"></div>
<svg class="ab" style="left:160px;top:98px" width="16" height="16" viewBox="0 0 16 16"><polygon points="7.90,0.60 10.07,5.51 15.41,6.06 11.42,9.64 12.54,14.89 7.90,12.20 3.26,14.89 4.38,9.64 0.39,6.06 5.73,5.51" fill="#ffd500" stroke="#9a9a60" stroke-width="0.6" stroke-linejoin="miter"/></svg>
<svg class="ab" style="left:182px;top:98px" width="16" height="16" viewBox="0 0 16 16"><polygon points="7.90,0.60 10.07,5.51 15.41,6.06 11.42,9.64 12.54,14.89 7.90,12.20 3.26,14.89 4.38,9.64 0.39,6.06 5.73,5.51" fill="#ffd500" stroke="#9a9a60" stroke-width="0.6" stroke-linejoin="miter"/></svg>
<svg class="ab av" style="left:199px;top:91px" width="24" height="24" viewBox="0 0 24 24"><rect width="24" height="24" rx="3" fill="#f7f8f9"/><path d="M0.5 24 V21.5 Q1.5 17 7.5 15.8 L11.8 18 L16 15.8 Q22.5 17 23.5 21.5 V24 Z" fill="#e8ecf1"/><path d="M10 18.8 L13.6 18.8 L12.6 20.6 L13.6 24 L10.8 24 L11.2 20.6 Z" fill="#5f6f88"/><path d="M8.8 13 L15 13 L14.6 17.2 L11.8 19 L9.2 17.2 Z" fill="#c99880"/><path d="M7.4 9.5 Q7.4 16.8 11.9 17.2 Q16.4 16.8 16.4 9.5 Q16.4 4.6 11.9 4.6 Q7.4 4.6 7.4 9.5 Z" fill="#d6a187"/><path d="M9 9.2 H11 M12.8 9.2 H14.8" stroke="#6a4a3a" stroke-width="0.9"/><path d="M11.2 14.4 H13" stroke="#a86a5a" stroke-width="0.6"/><path d="M7 11 Q6.2 2 11.8 1.4 Q17.6 1.6 16.9 11 Q16.6 5.6 11.8 5.4 Q7.6 5.6 7 11 Z" fill="#756454"/></svg>
</div>
<div class="card" style="left:963px;top:280px;height:114px;background:#ffffff;border-color:#d0d3d1;border-bottom-color:#b1b4b2;color:#4c4c4c">
<div class="t b" style="left:5px;top:5px">Social network integration</div>
<div class="t" style="left:5px;top:23px">Research &amp; Development</div>
<div class="hb" style="left:5px;top:45px;width:36px"><svg width="11" height="10" viewBox="0 0 11 10" style="position:absolute;left:3px;top:3.5px"><ellipse cx="5.3" cy="5" rx="4.6" ry="4.3" fill="none" stroke="#4c4c4c" stroke-width="1.05"/><path d="M5.3 2.3 V5.1 L7.1 6.7" fill="none" stroke="#4c4c4c" stroke-width="0.9"/></svg><span style="position:absolute;left:18px;top:2px">38</span></div>
<div class="dot red" style="left:137px;top:81px;background:#d0343c"></div>
<svg class="ab" style="left:160px;top:80px" width="16" height="16" viewBox="0 0 16 16"><polygon points="7.90,0.60 10.07,5.51 15.41,6.06 11.42,9.64 12.54,14.89 7.90,12.20 3.26,14.89 4.38,9.64 0.39,6.06 5.73,5.51" fill="#ffd500" stroke="#9a9a60" stroke-width="0.6" stroke-linejoin="miter"/></svg>
<svg class="ab" style="left:182px;top:80px" width="16" height="16" viewBox="0 0 16 16"><polygon points="7.90,0.60 10.07,5.51 15.41,6.06 11.42,9.64 12.54,14.89 7.90,12.20 3.26,14.89 4.38,9.64 0.39,6.06 5.73,5.51" fill="#ffd500" stroke="#9a9a60" stroke-width="0.6" stroke-linejoin="miter"/></svg>
<svg class="ab av" style="left:199px;top:73px" width="24" height="24" viewBox="0 0 24 24"><rect width="24" height="24" rx="3" fill="#f7f8f9"/><path d="M0.5 24 V21.5 Q1.5 17 7.5 15.8 L11.8 18 L16 15.8 Q22.5 17 23.5 21.5 V24 Z" fill="#e8ecf1"/><path d="M10 18.8 L13.6 18.8 L12.6 20.6 L13.6 24 L10.8 24 L11.2 20.6 Z" fill="#5f6f88"/><path d="M8.8 13 L15 13 L14.6 17.2 L11.8 19 L9.2 17.2 Z" fill="#c99880"/><path d="M7.4 9.5 Q7.4 16.8 11.9 17.2 Q16.4 16.8 16.4 9.5 Q16.4 4.6 11.9 4.6 Q7.4 4.6 7.4 9.5 Z" fill="#d6a187"/><path d="M9 9.2 H11 M12.8 9.2 H14.8" stroke="#6a4a3a" stroke-width="0.9"/><path d="M11.2 14.4 H13" stroke="#a86a5a" stroke-width="0.6"/><path d="M7 11 Q6.2 2 11.8 1.4 Q17.6 1.6 16.9 11 Q16.6 5.6 11.8 5.4 Q7.6 5.6 7 11 Z" fill="#756454"/></svg>
</div>
<div class="card" style="left:963px;top:398px;height:114px;background:#ffffff;border-color:#d0d3d1;border-bottom-color:#b1b4b2;color:#4c4c4c">
<div class="t b" style="left:5px;top:5px">Integration of core components</div>
<div class="t" style="left:5px;top:23px">E-Learning Integration</div>
<div class="hb" style="left:5px;top:45px;width:36px"><svg width="11" height="10" viewBox="0 0 11 10" style="position:absolute;left:3px;top:3.5px"><ellipse cx="5.3" cy="5" rx="4.6" ry="4.3" fill="none" stroke="#4c4c4c" stroke-width="1.05"/><path d="M5.3 2.3 V5.1 L7.1 6.7" fill="none" stroke="#4c4c4c" stroke-width="0.9"/></svg><span style="position:absolute;left:18px;top:2px">34</span></div>
<div class="dot" style="left:137px;top:81px;background:#c9c9c9"></div>
<svg class="ab" style="left:160px;top:80px" width="16" height="16" viewBox="0 0 16 16"><polygon points="7.90,0.60 10.07,5.51 15.41,6.06 11.42,9.64 12.54,14.89 7.90,12.20 3.26,14.89 4.38,9.64 0.39,6.06 5.73,5.51" fill="#ffd500" stroke="#9a9a60" stroke-width="0.6" stroke-linejoin="miter"/></svg>
<svg class="ab" style="left:182px;top:80px" width="16" height="16" viewBox="0 0 16 16"><polygon points="7.90,0.60 10.07,5.51 15.41,6.06 11.42,9.64 12.54,14.89 7.90,12.20 3.26,14.89 4.38,9.64 0.39,6.06 5.73,5.51" fill="#ffd500" stroke="#9a9a60" stroke-width="0.6" stroke-linejoin="miter"/></svg>
<svg class="ab av" style="left:199px;top:73px" width="24" height="24" viewBox="0 0 24 24"><rect width="24" height="24" rx="3" fill="#f7f8f9"/><path d="M0.5 24 V21.5 Q1.5 17 7.5 15.8 L11.8 18 L16 15.8 Q22.5 17 23.5 21.5 V24 Z" fill="#e8ecf1"/><path d="M10 18.8 L13.6 18.8 L12.6 20.6 L13.6 24 L10.8 24 L11.2 20.6 Z" fill="#5f6f88"/><path d="M8.8 13 L15 13 L14.6 17.2 L11.8 19 L9.2 17.2 Z" fill="#c99880"/><path d="M7.4 9.5 Q7.4 16.8 11.9 17.2 Q16.4 16.8 16.4 9.5 Q16.4 4.6 11.9 4.6 Q7.4 4.6 7.4 9.5 Z" fill="#d6a187"/><path d="M9 9.2 H11 M12.8 9.2 H14.8" stroke="#6a4a3a" stroke-width="0.9"/><path d="M11.2 14.4 H13" stroke="#a86a5a" stroke-width="0.6"/><path d="M7 11 Q6.2 2 11.8 1.4 Q17.6 1.6 16.9 11 Q16.6 5.6 11.8 5.4 Q7.6 5.6 7 11 Z" fill="#756454"/></svg>
</div>
<div class="card" style="left:963px;top:516px;height:114px;background:#e3ffc7;border-color:#c3dfa8;border-bottom-color:#a6c28c;color:#5d6937">
<div class="t b" style="left:5px;top:5px">Budget Planning</div>
<div class="t" style="left:5px;top:23px">The Jackson Group's Project</div>
<div class="hb" style="left:5px;top:45px;width:36px"><svg width="11" height="10" viewBox="0 0 11 10" style="position:absolute;left:3px;top:3.5px"><ellipse cx="5.3" cy="5" rx="4.6" ry="4.3" fill="none" stroke="#4c4c4c" stroke-width="1.05"/><path d="M5.3 2.3 V5.1 L7.1 6.7" fill="none" stroke="#4c4c4c" stroke-width="0.9"/></svg><span style="position:absolute;left:18px;top:2px">12</span></div>
<div class="dot" style="left:137px;top:81px;background:#c9c9c9"></div>
<svg class="ab" style="left:160px;top:80px" width="16" height="16" viewBox="0 0 16 16"><polygon points="7.90,0.60 10.07,5.51 15.41,6.06 11.42,9.64 12.54,14.89 7.90,12.20 3.26,14.89 4.38,9.64 0.39,6.06 5.73,5.51" fill="#ffd500" stroke="#9a9a60" stroke-width="0.6" stroke-linejoin="miter"/></svg>
<svg class="ab" style="left:182px;top:80px" width="16" height="16" viewBox="0 0 16 16"><polygon points="7.90,0.60 10.07,5.51 15.41,6.06 11.42,9.64 12.54,14.89 7.90,12.20 3.26,14.89 4.38,9.64 0.39,6.06 5.73,5.51" fill="#ffd500" stroke="#9a9a60" stroke-width="0.6" stroke-linejoin="miter"/></svg>
<svg class="ab av" style="left:199px;top:73px" width="24" height="24" viewBox="0 0 24 24"><rect width="24" height="24" rx="3" fill="#f7f8f9"/><path d="M0.5 24 V21.5 Q1.5 17 7.5 15.8 L11.8 18 L16 15.8 Q22.5 17 23.5 21.5 V24 Z" fill="#e8ecf1"/><path d="M10 18.8 L13.6 18.8 L12.6 20.6 L13.6 24 L10.8 24 L11.2 20.6 Z" fill="#5f6f88"/><path d="M8.8 13 L15 13 L14.6 17.2 L11.8 19 L9.2 17.2 Z" fill="#c99880"/><path d="M7.4 9.5 Q7.4 16.8 11.9 17.2 Q16.4 16.8 16.4 9.5 Q16.4 4.6 11.9 4.6 Q7.4 4.6 7.4 9.5 Z" fill="#d6a187"/><path d="M9 9.2 H11 M12.8 9.2 H14.8" stroke="#6a4a3a" stroke-width="0.9"/><path d="M11.2 14.4 H13" stroke="#a86a5a" stroke-width="0.6"/><path d="M7 11 Q6.2 2 11.8 1.4 Q17.6 1.6 16.9 11 Q16.6 5.6 11.8 5.4 Q7.6 5.6 7 11 Z" fill="#756454"/></svg>
</div>
</div>
<div id="sb"><svg class="ab" style="left:0;top:0" width="13" height="463" viewBox="0 0 13 463"><path d="M4 10 L7.5 6 L11 10 Z" fill="#a3a3a3"/><rect x="2" y="14" width="11" height="157" fill="#bdbfbd"/><rect x="0" y="452" width="13" height="11" fill="#d9dad9"/><path d="M3.8 457 L11.2 457 L7.5 461 Z" fill="#454545"/></svg></div>
</body></html>
